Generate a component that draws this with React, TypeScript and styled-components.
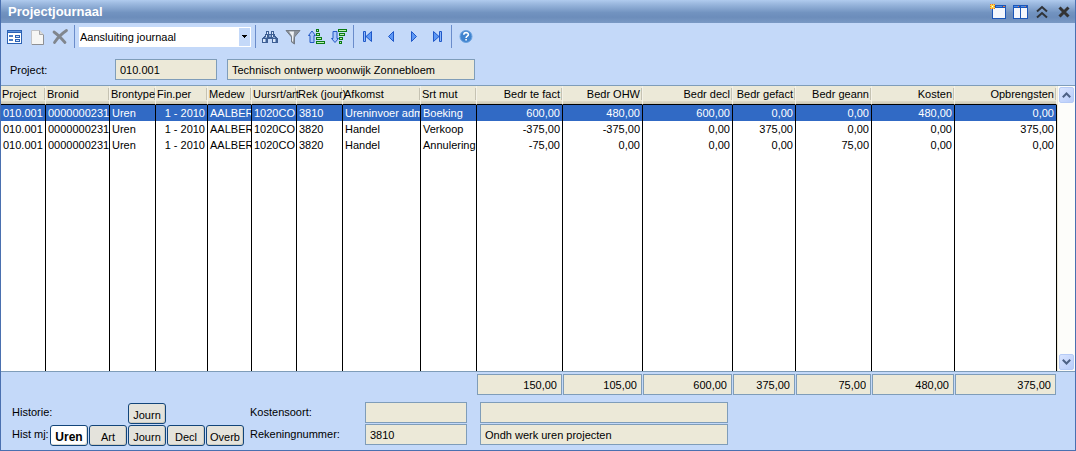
import React from "react";
import styled, { createGlobalStyle, css } from "styled-components";

const font = `"Liberation Sans", Arial, sans-serif`;

const GlobalStyle = createGlobalStyle`
  * { box-sizing: border-box; }
  body { margin: 0; background: #c4d9f9; }
  body, button, input, select { font-family: ${font}; font-size: 11px; color: #000; }
`;

const Window = styled.main`
  display: flex;
  flex-direction: column;
  min-height: 100vh;
  background: #c4d9f9;
  border: 1px solid #4a70b0;
  border-top: 0;
`;

const TitleBar = styled.header`
  display: flex;
  align-items: center;
  height: 23px;
  padding: 0 0 0 7px;
  background: linear-gradient(#b0cbee 0%, #9dbae0 15%, #7293c0 55%, #6c8dbb 75%, #7a99c4 100%);
`;

const Title = styled.h1`
  flex: 1;
  margin: 0;
  font-size: 13px;
  line-height: 16px;
  font-weight: bold;
  color: #fff;
`;

const IconButton = styled.button`
  display: flex;
  align-items: center;
  justify-content: center;
  width: 22px;
  height: 22px;
  padding: 0;
  border: 0;
  background: transparent;
`;

const Toolbar = styled.div`
  display: flex;
  align-items: center;
  gap: 1px;
  height: 27px;
  padding: 0 2px;
`;

const Separator = styled.span`
  width: 1px;
  height: 23px;
  margin: 0 2px;
  background: #6a8ccb;
`;

const SelectBox = styled.div`
  position: relative;
  width: 172px;
  margin: 0 1px;
`;

const Select = styled.select`
  appearance: none;
  display: block;
  width: 100%;
  height: 20px;
  padding: 0 14px 0 0;
  border: 1px solid #fff;
  border-radius: 0;
  background: #fff;
`;

const SelectArrow = styled.span`
  position: absolute;
  top: 1px;
  right: 1px;
  display: flex;
  align-items: center;
  justify-content: center;
  width: 11px;
  height: 18px;
  background: #c4d9f9;
  pointer-events: none;
`;

const Field = styled.input<{ $align?: "right" }>`
  min-width: 0;
  width: 100%;
  height: 21px;
  padding: 0 4px;
  border: 1px solid #7f9db9;
  border-radius: 0;
  background: #ece9d8;
  text-align: ${(p) => p.$align ?? "left"};
`;

const FilterForm = styled.div`
  display: grid;
  grid-template-columns: 95px 102px minmax(0, 248px);
  column-gap: 10px;
  align-items: center;
  padding: 9px 9px 5px;
`;

const FieldLabel = styled.label`
  line-height: 20px;
  white-space: nowrap;
`;

const GridArea = styled.section`
  display: flex;
  flex: 1;
  border-top: 1px solid #7f9db9;
  border-bottom: 1px solid #7f9db9;
  background: #fff;
`;

const Table = styled.table`
  flex: 1;
  min-width: 0;
  width: 100%;
  table-layout: fixed;
  border-collapse: separate;
  border-spacing: 0;
`;

const HeadRow = styled.tr`
  height: 19px;
`;

const HeadCell = styled.th<{ $numeric: boolean }>`
  height: 19px;
  padding: 0 ${(p) => (p.$numeric ? "2px" : "0")} 2px 1px;
  border-right: 1px solid #f4f2e8;
  border-bottom: 1px solid #000;
  background:
    linear-gradient(#c5c2b2, #c5c2b2) right 2px / 1px 12px no-repeat,
    linear-gradient(#ece9d8 0 15px, #e0dccb 15px, #cac6b4 18px);
  font-weight: normal;
  line-height: 16px;
  text-align: ${(p) => (p.$numeric ? "right" : "left")};
  white-space: nowrap;
`;

const cellBase = css<{ $numeric: boolean }>`
  padding: 0 ${(p) => (p.$numeric ? "2px" : "0")} 0 ${(p) => (p.$numeric ? "0" : "2px")};
  border-right: 1px solid #000;
  text-align: ${(p) => (p.$numeric ? "right" : "left")};
  white-space: nowrap;
  overflow: hidden;
`;

const Cell = styled.td<{ $numeric: boolean }>`
  ${cellBase}
  height: 16px;
  line-height: 16px;
`;

const FillCell = styled.td<{ $numeric: boolean }>`
  ${cellBase}
`;

const BodyRow = styled.tr<{ $selected?: boolean }>`
  height: 16px;
  background: ${(p) => (p.$selected ? "#316ac5" : "#fff")};
  color: ${(p) => (p.$selected ? "#fff" : "#000")};
`;

const ScrollBar = styled.div`
  display: flex;
  flex-direction: column;
  justify-content: space-between;
  align-items: flex-end;
  width: 18px;
  padding: 1px;
  border-left: 1px solid #ece9d8;
  background: #fdfdfa;
`;

const ScrollButton = styled.button`
  display: flex;
  align-items: center;
  justify-content: center;
  width: 15px;
  height: 16px;
  padding: 0;
  border: 1px solid #b6cbf6;
  border-radius: 2px;
  background: linear-gradient(135deg, #d8e4ff, #b9cdfa);
`;

const Totals = styled.div<{ $columns: string }>`
  display: grid;
  grid-template-columns: ${(p) => p.$columns};
  padding: 2px 18px 0 0;
`;

const TotalField = styled(Field)`
  width: auto;
  margin-right: 1px;
`;

const Footer = styled.footer`
  display: flex;
  gap: 6px;
  padding: 7px 11px 4px;
`;

const ButtonGrid = styled.div`
  display: grid;
  grid-template-columns: 37px repeat(5, 38px);
  grid-template-rows: 21px 21px;
  gap: 1px;
  padding-top: 1px;
`;

const RowLabel = styled.span`
  grid-column: 1;
  line-height: 18px;
  white-space: nowrap;
`;

const HistoryButton = styled.button<{ $active?: boolean; $column?: number }>`
  grid-column: ${(p) => p.$column ?? "auto"};
  padding: 2px 0 0;
  border: 1px solid #12457a;
  border-radius: 3px;
  background: ${(p) => (p.$active ? "#fff" : "#e4e3dc")};
  box-shadow: inset -1px -1px 0 ${(p) => (p.$active ? "#dcdad0" : "#cfccc0")};
  font-weight: ${(p) => (p.$active ? "bold" : "normal")};
  font-size: ${(p) => (p.$active ? "12px" : "11px")};
`;

const DetailGrid = styled.div`
  flex: 1;
  display: grid;
  grid-template-columns: 102px 102px minmax(0, 248px);
  grid-template-rows: 21px 21px;
  gap: 1px 13px;
`;

const icons = {
  form: (
    <g shapeRendering="crispEdges">
      <rect x="1" y="1" width="15" height="14" fill="#2c62b4" />
      <rect x="2" y="4" width="13" height="10" fill="#fff" />
      <path d="M3 6h4v2H3zM3 10h4v2H3z" fill="#4c7cc4" />
      <path d="M9 6h5v3H9zM9 10h5v3H9z" fill="#2c62b4" />
      <path d="M10 7h3v1h-3zM10 11h3v1h-3z" fill="#cfe0fa" />
      <path d="M2 2h13v1H2z" fill="#5e92dc" />
    </g>
  ),
  page: (
    <>
      <path d="M2.500 1.500h8l4 4v10h-12z" fill="#f6f6f4" stroke="#c2c4c8" />
      <path d="M10.500 1.500v4h4" fill="#dcdcda" stroke="#a4a6aa" />
      <path d="M3 15.500h11.500V6" fill="none" stroke="#8e9094" />
    </>
  ),
  remove: (
    <path d="M2 3Q7 6.500 13 13.500M14.500 1.500Q7 6.500 2.500 13.500" fill="none" stroke="#80868e" strokeWidth="2.800" strokeLinecap="round" />
  ),
  find: (
    <g shapeRendering="crispEdges">
      <path d="M4 2h3v3h2V2h3v3h1v2h1v1h1v1h1v5h-6v-4H6v4H0V9h1V8h1V7h1V5h1z" fill="#3e5f94" />
      <path d="M5 3h1v2H5zM10 3h1v2h-1zM1 10h2v3H1zM11 10h2v3h-2zM4 6h1v2H4zM10 6h1v2h-1z" fill="#dbe7f8" />
      <path d="M3 8h2v1H3zM11 8h2v1h-2zM3 10h1v3H3zM13 10h1v3h-1zM7 6h2v2H7z" fill="#8aa6d0" />
    </g>
  ),
  filter: (
    <>
      <path d="M1 1.500h14L9.500 8v7l-3-2V8z" fill="#8b929b" stroke="#737a84" />
      <path d="M4 2.500h5L8 13l-1-1V7z" fill="#eef1f4" />
    </>
  ),
  sortUp: (
    <>
      <path d="M4 2l3.500 4.500H6v7H2v-7H.5z" fill="#a9c6fa" stroke="#2458c4" />
      <g shapeRendering="crispEdges">
        <path d="M8 0h3v3H8zM8 4h4v3H8zM8 8h6v3H8zM8 12h9v3H8z" fill="#0b7a14" />
        <path d="M9 1h1v1H9zM9 5h2v1H9zM9 9h4v1H9zM9 13h7v1H9z" fill="#b9f0b0" />
      </g>
    </>
  ),
  sortDown: (
    <>
      <path d="M2 2.500h4v7h1.500L4 13.500.5 9.500H2z" fill="#a9c6fa" stroke="#2458c4" />
      <g shapeRendering="crispEdges">
        <path d="M7 0h9v3H7zM8 4h6v3H8zM8 8h4v3H8zM8 12h3v3H8z" fill="#0b7a14" />
        <path d="M8 1h7v1H8zM9 5h4v1H9zM9 9h2v1H9zM9 13h1v1H9z" fill="#b9f0b0" />
      </g>
    </>
  ),
  first: (
    <>
      <path d="M3.500 2.500h2v10h-2z" fill="#8db7fb" stroke="#1f58c8" />
      <path d="M11.500 2.500v10L6 7.500z" fill="#5c97f5" stroke="#1f58c8" />
    </>
  ),
  previous: <path d="M10.500 2.500v10L5.500 7.500z" fill="#5c97f5" stroke="#1f58c8" />,
  next: <path d="M5.500 2.500v10L10.500 7.500z" fill="#5c97f5" stroke="#1f58c8" />,
  last: (
    <>
      <path d="M10.500 2.500h2v10h-2z" fill="#8db7fb" stroke="#1f58c8" />
      <path d="M4.500 2.500v10L10 7.500z" fill="#5c97f5" stroke="#1f58c8" />
    </>
  ),
  help: (
    <>
      <circle cx="8" cy="7.500" r="6" fill="#3f83cf" stroke="#6ba3e0" />
      <path d="M5.800 5.800c0-3 4.600-2.800 4.600-.3 0 1.700-2.300 1.600-2.300 3.400M8.100 10v1.600" fill="none" stroke="#fff" strokeWidth="1.600" />
    </>
  ),
  newWindow: (
    <g shapeRendering="crispEdges">
      <path d="M2 1h14v14H2z" fill="#1c57b8" />
      <path d="M3 4h12v10H3z" fill="#f4f7fc" />
      <path d="M6 2h6v1H6z" fill="#4c8ce8" />
      <path d="M13 2h2v1h-2z" fill="#f47a3a" />
      <path d="M0 0h5v5H0z" fill="#f9d94c" />
      <path d="M0 0h1v1H0zM2 0h1v1H2zM4 0h1v1H4zM0 2h1v1H0zM4 2h1v1H4zM0 4h1v1H0zM2 4h1v1H2zM4 4h1v1H4z" fill="#ef6a2c" />
      <path d="M2 2h1v1H2z" fill="#fff" />
    </g>
  ),
  split: (
    <g shapeRendering="crispEdges">
      <path d="M1 1h15v14H1z" fill="#1c57b8" />
      <path d="M2 4h6v10H2zM9 4h6v10H9z" fill="#f4f7fc" />
      <path d="M2 2h4v1H2zM9 2h4v1H9z" fill="#4c8ce8" />
      <path d="M6 2h1v1H6zM13 2h1v1h-1z" fill="#f47a3a" />
    </g>
  ),
  collapse: <path d="M3 7.500l5-4.500 5 4.500M3 13.500l5-4.500 5 4.500" fill="none" stroke="#2f3338" strokeWidth="2" />,
  close: <path d="M3.500 3.500l9 9M12.500 3.500l-9 9" fill="none" stroke="#333" strokeWidth="3" />,
};

type IconName = keyof typeof icons;

function Tool({ icon, label }: { icon: IconName; label: string }) {
  return (
    <IconButton type="button" aria-label={label} title={label}>
      <svg width="16" height="16" viewBox="0 0 16 16" overflow="visible" aria-hidden="true">
        {icons[icon]}
      </svg>
    </IconButton>
  );
}

interface Column {
  title: string;
  width: number;
  numeric?: boolean;
  numericHead?: boolean;
  total?: string;
}

const columns: Column[] = [
  { title: "Project", width: 45 },
  { title: "Bronid", width: 64 },
  { title: "Brontype", width: 46 },
  { title: "Fin.per", width: 52, numeric: true, numericHead: false },
  { title: "Medew", width: 44 },
  { title: "Uursrt/art", width: 45 },
  { title: "Rek (jour)", width: 46 },
  { title: "Afkomst", width: 78 },
  { title: "Srt mut", width: 56 },
  { title: "Bedr te fact", width: 86, numeric: true, total: "150,00" },
  { title: "Bedr OHW", width: 80, numeric: true, total: "105,00" },
  { title: "Bedr decl", width: 90, numeric: true, total: "600,00" },
  { title: "Bedr gefact", width: 63, numeric: true, total: "375,00" },
  { title: "Bedr geann", width: 76, numeric: true, total: "75,00" },
  { title: "Kosten", width: 83, numeric: true, total: "480,00" },
  { title: "Opbrengsten", width: 102, numeric: true, total: "375,00" },
];

const rows = [
  ["010.001", "0000000231", "Uren", "1 - 2010", "AALBER", "1020CO", "3810", "Ureninvoer adm", "Boeking", "600,00", "480,00", "600,00", "0,00", "0,00", "480,00", "0,00"],
  ["010.001", "0000000231", "Uren", "1 - 2010", "AALBER", "1020CO", "3820", "Handel", "Verkoop", "-375,00", "-375,00", "0,00", "375,00", "0,00", "0,00", "375,00"],
  ["010.001", "0000000231", "Uren", "1 - 2010", "AALBER", "1020CO", "3820", "Handel", "Annulering", "-75,00", "0,00", "0,00", "0,00", "75,00", "0,00", "0,00"],
];

const firstTotal = columns.findIndex((c) => c.total);
const leadWidth = columns.slice(0, firstTotal).reduce((sum, c) => sum + c.width, 0);
const totalColumns = [leadWidth, ...columns.slice(firstTotal).map((c) => c.width)]
  .map((w) => `minmax(0, ${w}fr)`)
  .join(" ");

export default function App() {
  return (
    <>
      <GlobalStyle />
      <Window>
        <TitleBar>
          <Title>Projectjournaal</Title>
          <Tool icon="newWindow" label="Nieuw venster" />
          <Tool icon="split" label="Splitsen" />
          <Tool icon="collapse" label="Inklappen" />
          <Tool icon="close" label="Sluiten" />
        </TitleBar>

        <Toolbar>
          <Tool icon="form" label="Formulier" />
          <Tool icon="page" label="Nieuw" />
          <Tool icon="remove" label="Verwijderen" />
          <Separator />
          <SelectBox>
            <Select aria-label="Weergave" defaultValue="aansluiting">
              <option value="aansluiting">Aansluiting journaal</option>
            </Select>
            <SelectArrow>
              <svg width="5" height="3" viewBox="0 0 5 3" aria-hidden="true">
                <path d="M0 0h5v1H4v1H3v1H2V2H1V1H0z" fill="#000" shapeRendering="crispEdges" />
              </svg>
            </SelectArrow>
          </SelectBox>
          <Separator />
          <Tool icon="find" label="Zoeken" />
          <Tool icon="filter" label="Filter" />
          <Tool icon="sortUp" label="Oplopend sorteren" />
          <Tool icon="sortDown" label="Aflopend sorteren" />
          <Separator />
          <Tool icon="first" label="Eerste" />
          <Tool icon="previous" label="Vorige" />
          <Tool icon="next" label="Volgende" />
          <Tool icon="last" label="Laatste" />
          <Separator />
          <Tool icon="help" label="Help" />
        </Toolbar>

        <FilterForm>
          <FieldLabel htmlFor="project">Project:</FieldLabel>
          <Field id="project" readOnly defaultValue="010.001" />
          <Field aria-label="Projectomschrijving" readOnly defaultValue="Technisch ontwerp woonwijk Zonnebloem" />
        </FilterForm>

        <GridArea>
          <Table>
            <colgroup>
              {columns.map((c) => (
                <col key={c.title} width={c.width} />
              ))}
            </colgroup>
            <thead>
              <HeadRow>
                {columns.map((c) => (
                  <HeadCell key={c.title} scope="col" $numeric={c.numericHead ?? !!c.numeric}>
                    {c.title}
                  </HeadCell>
                ))}
              </HeadRow>
            </thead>
            <tbody>
              {rows.map((row, r) => (
                <BodyRow key={r} $selected={r === 0}>
                  {row.map((value, i) => (
                    <Cell key={i} $numeric={!!columns[i].numeric}>
                      {value}
                    </Cell>
                  ))}
                </BodyRow>
              ))}
              <tr aria-hidden="true">
                {columns.map((c) => (
                  <FillCell key={c.title} $numeric={false} />
                ))}
              </tr>
            </tbody>
          </Table>
          <ScrollBar>
            <ScrollButton type="button" aria-label="Omhoog">
              <svg width="9" height="6" viewBox="0 0 9 6" aria-hidden="true">
                <path d="M.8 5.200l3.700-3.700 3.700 3.700" fill="none" stroke="#4d6185" strokeWidth="2" />
              </svg>
            </ScrollButton>
            <ScrollButton type="button" aria-label="Omlaag">
              <svg width="9" height="6" viewBox="0 0 9 6" aria-hidden="true">
                <path d="M.8.8l3.700 3.700L8.200.8" fill="none" stroke="#4d6185" strokeWidth="2" />
              </svg>
            </ScrollButton>
          </ScrollBar>
        </GridArea>

        <Totals $columns={totalColumns}>
          <span />
          {columns.slice(firstTotal).map((c) => (
            <TotalField key={c.title} $align="right" aria-label={`Totaal ${c.title}`} readOnly defaultValue={c.total} />
          ))}
        </Totals>

        <Footer>
          <ButtonGrid>
            <RowLabel>Historie:</RowLabel>
            <HistoryButton type="button" $column={4}>Journ</HistoryButton>
            <RowLabel>Hist mj:</RowLabel>
            <HistoryButton type="button" $active>Uren</HistoryButton>
            <HistoryButton type="button">Art</HistoryButton>
            <HistoryButton type="button">Journ</HistoryButton>
            <HistoryButton type="button">Decl</HistoryButton>
            <HistoryButton type="button">Overb</HistoryButton>
          </ButtonGrid>
          <DetailGrid>
            <FieldLabel htmlFor="kostensoort">Kostensoort:</FieldLabel>
            <Field id="kostensoort" readOnly defaultValue="" />
            <Field aria-label="Kostensoort omschrijving" readOnly defaultValue="" />
            <FieldLabel htmlFor="rekening">Rekeningnummer:</FieldLabel>
            <Field id="rekening" readOnly defaultValue="3810" />
            <Field aria-label="Rekening omschrijving" readOnly defaultValue="Ondh werk uren projecten" />
          </DetailGrid>
        </Footer>
      </Window>
    </>
  );
}
